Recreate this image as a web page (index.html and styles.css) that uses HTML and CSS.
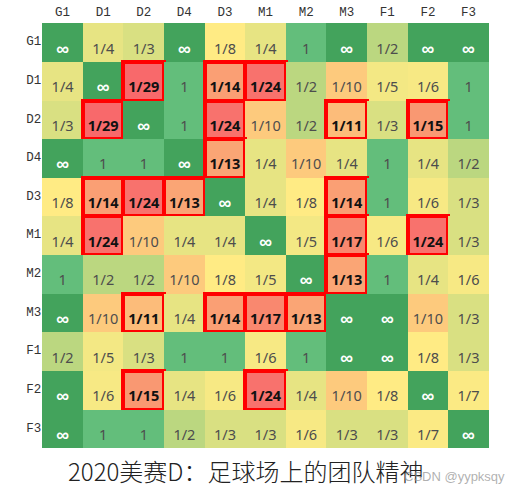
FILE: index.html
```html
<!DOCTYPE html>
<html lang="zh-CN">
<head>
    <meta charset="UTF-8">
    <meta name="viewport" content="width=device-width, initial-scale=1.0">
    <title>团队精神矩阵</title>
    <link rel="stylesheet" href="styles.css">
</head>
<body>
    <div class="figure">
        <div class="matrix">
            <div class="corner"></div>
            <div class="col-label">G1</div>
            <div class="col-label">D1</div>
            <div class="col-label">D2</div>
            <div class="col-label">D4</div>
            <div class="col-label">D3</div>
            <div class="col-label">M1</div>
            <div class="col-label">M2</div>
            <div class="col-label">M3</div>
            <div class="col-label">F1</div>
            <div class="col-label">F2</div>
            <div class="col-label">F3</div>

            <div class="row-label">G1</div>
            <div class="cell inf">∞</div>
            <div class="cell c4">1/4</div>
            <div class="cell c3">1/3</div>
            <div class="cell inf">∞</div>
            <div class="cell c8">1/8</div>
            <div class="cell c4">1/4</div>
            <div class="cell c1">1</div>
            <div class="cell inf">∞</div>
            <div class="cell c2">1/2</div>
            <div class="cell inf">∞</div>
            <div class="cell inf">∞</div>

            <div class="row-label">D1</div>
            <div class="cell c4">1/4</div>
            <div class="cell inf">∞</div>
            <div class="cell c29 hl">1/29</div>
            <div class="cell c1">1</div>
            <div class="cell c14 hl">1/14</div>
            <div class="cell c24 hl">1/24</div>
            <div class="cell c2">1/2</div>
            <div class="cell c10">1/10</div>
            <div class="cell c5">1/5</div>
            <div class="cell c6">1/6</div>
            <div class="cell c1">1</div>

            <div class="row-label">D2</div>
            <div class="cell c3">1/3</div>
            <div class="cell c29 hl">1/29</div>
            <div class="cell inf">∞</div>
            <div class="cell c1">1</div>
            <div class="cell c24 hl">1/24</div>
            <div class="cell c10">1/10</div>
            <div class="cell c2">1/2</div>
            <div class="cell c11 hl">1/11</div>
            <div class="cell c3">1/3</div>
            <div class="cell c15 hl">1/15</div>
            <div class="cell c1">1</div>

            <div class="row-label">D4</div>
            <div class="cell inf">∞</div>
            <div class="cell c1">1</div>
            <div class="cell c1">1</div>
            <div class="cell inf">∞</div>
            <div class="cell c13 hl">1/13</div>
            <div class="cell c4">1/4</div>
            <div class="cell c10">1/10</div>
            <div class="cell c4">1/4</div>
            <div class="cell c1">1</div>
            <div class="cell c4">1/4</div>
            <div class="cell c2">1/2</div>

            <div class="row-label">D3</div>
            <div class="cell c8">1/8</div>
            <div class="cell c14 hl">1/14</div>
            <div class="cell c24 hl">1/24</div>
            <div class="cell c13 hl">1/13</div>
            <div class="cell inf">∞</div>
            <div class="cell c4">1/4</div>
            <div class="cell c8">1/8</div>
            <div class="cell c14 hl">1/14</div>
            <div class="cell c1">1</div>
            <div class="cell c6">1/6</div>
            <div class="cell c3">1/3</div>

            <div class="row-label">M1</div>
            <div class="cell c4">1/4</div>
            <div class="cell c24 hl">1/24</div>
            <div class="cell c10">1/10</div>
            <div class="cell c4">1/4</div>
            <div class="cell c4">1/4</div>
            <div class="cell inf">∞</div>
            <div class="cell c5">1/5</div>
            <div class="cell c17 hl">1/17</div>
            <div class="cell c6">1/6</div>
            <div class="cell c24 hl">1/24</div>
            <div class="cell c3">1/3</div>

            <div class="row-label">M2</div>
            <div class="cell c1">1</div>
            <div class="cell c2">1/2</div>
            <div class="cell c2">1/2</div>
            <div class="cell c10">1/10</div>
            <div class="cell c8">1/8</div>
            <div class="cell c5">1/5</div>
            <div class="cell inf">∞</div>
            <div class="cell c13 hl">1/13</div>
            <div class="cell c1">1</div>
            <div class="cell c4">1/4</div>
            <div class="cell c6">1/6</div>

            <div class="row-label">M3</div>
            <div class="cell inf">∞</div>
            <div class="cell c10">1/10</div>
            <div class="cell c11 hl">1/11</div>
            <div class="cell c4">1/4</div>
            <div class="cell c14 hl">1/14</div>
            <div class="cell c17 hl">1/17</div>
            <div class="cell c13 hl">1/13</div>
            <div class="cell inf">∞</div>
            <div class="cell inf">∞</div>
            <div class="cell c10">1/10</div>
            <div class="cell c3">1/3</div>

            <div class="row-label">F1</div>
            <div class="cell c2">1/2</div>
            <div class="cell c5">1/5</div>
            <div class="cell c3">1/3</div>
            <div class="cell c1">1</div>
            <div class="cell c1">1</div>
            <div class="cell c6">1/6</div>
            <div class="cell c1">1</div>
            <div class="cell inf">∞</div>
            <div class="cell inf">∞</div>
            <div class="cell c8">1/8</div>
            <div class="cell c3">1/3</div>

            <div class="row-label">F2</div>
            <div class="cell inf">∞</div>
            <div class="cell c6">1/6</div>
            <div class="cell c15 hl">1/15</div>
            <div class="cell c4">1/4</div>
            <div class="cell c6">1/6</div>
            <div class="cell c24 hl">1/24</div>
            <div class="cell c4">1/4</div>
            <div class="cell c10">1/10</div>
            <div class="cell c8">1/8</div>
            <div class="cell inf">∞</div>
            <div class="cell c7">1/7</div>

            <div class="row-label">F3</div>
            <div class="cell inf">∞</div>
            <div class="cell c1">1</div>
            <div class="cell c1">1</div>
            <div class="cell c2">1/2</div>
            <div class="cell c3">1/3</div>
            <div class="cell c3">1/3</div>
            <div class="cell c6">1/6</div>
            <div class="cell c3">1/3</div>
            <div class="cell c3">1/3</div>
            <div class="cell c7">1/7</div>
            <div class="cell inf">∞</div>
        </div>

        <p class="caption">2020美赛D：足球场上的团队精神</p>
        <span class="watermark">CSDN @yypksqy</span>
    </div>
</body>
</html>
```

FILE: styles.css
```css
/* heatmap of pass weights between players */
body {
    margin: 0;
    background-color: #fff;
    font-family: "Noto Sans", "Liberation Sans", sans-serif;
}
.figure {
    position: relative;
    width: 511px;
    height: 494px;
}
.matrix {
    display: grid;
    grid-template-columns: 42.3px repeat(11, 40.6px);
    grid-template-rows: 23.3px repeat(11, 38.63px);
}
.col-label, .row-label {
    font-family: "Liberation Mono", monospace;
    font-size: 12.5px;
    line-height: 1;
    color: #333;
    display: flex;
}
.col-label {
    justify-content: center;
    align-items: flex-end;
    padding-bottom: 4px;
}
.row-label {
    justify-content: flex-end;
    align-items: center;
    padding-right: 1px;
}
.cell {
    display: flex;
    justify-content: center;
    align-items: center;
    padding-top: 10px;
    box-sizing: border-box;
    font-size: 14.5px;
    color: #4d4d4d;
}
.cell.inf {
    background-color: #43a35c;
    color: #fff;
    font-size: 18px;
    font-weight: bold;
}
/* red box around the weakest links */
.cell.hl {
    outline: 4px solid #ff0000;
    outline-offset: -2px;
    font-weight: bold;
    color: #111;
}
.c1 { background-color: #63be7b; }
.c2 { background-color: #bbd780; }
.c3 { background-color: #d9e082; }
.c4 { background-color: #e7e483; }
.c5 { background-color: #f3e884; }
.c6 { background-color: #f7e984; }
.c7 { background-color: #fbea84; }
.c8 { background-color: #ffeb84; }
.c10 { background-color: #fdca7d; }
.c11 { background-color: #fcbc7a; }
.c13 { background-color: #faa575; }
.c14 { background-color: #fa9f74; }
.c15 { background-color: #f99872; }
.c17 { background-color: #f9886f; }
.c24 { background-color: #f8726d; }
.c29 { background-color: #f8696b; }
.caption {
    margin: 9px 0 0;
    padding-left: 68px;
    font-family: "Noto Sans CJK SC", sans-serif;
    font-size: 24px;
    font-weight: 300;
    line-height: 28px;
    color: #222;
}
.watermark {
    position: absolute;
    left: 404px;
    top: 469px;
    font-family: "Liberation Sans", sans-serif;
    font-size: 13px;
    color: rgba(150, 150, 150, 0.75);
}
```
